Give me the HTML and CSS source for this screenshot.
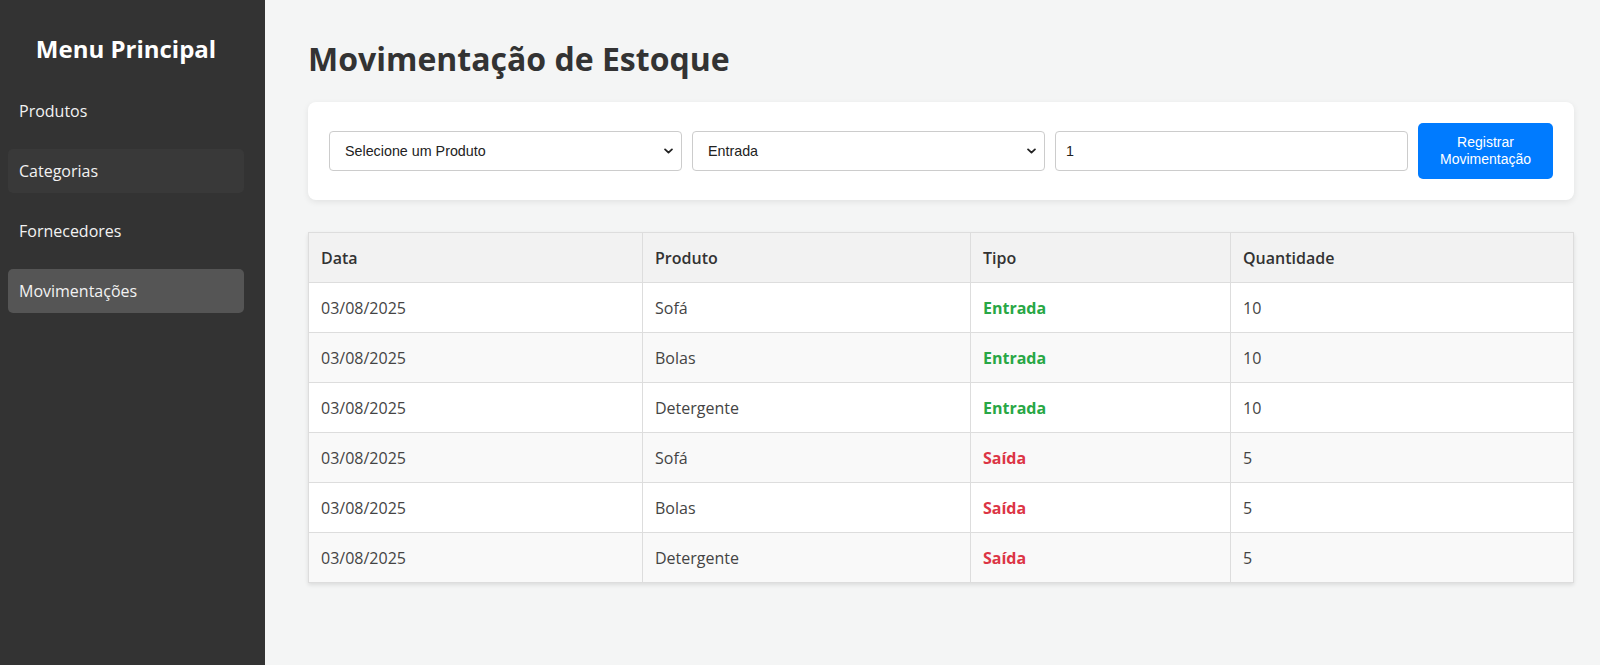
FILE: index.html
```html
<!DOCTYPE html>
<html lang="pt-BR">
<head>
<meta charset="utf-8">
<title>Movimentação de Estoque</title>
<link rel="stylesheet" href="styles.css">
</head>
<body>
<aside class="sidebar">
  <h2 class="sidebar-title">Menu Principal</h2>
  <nav class="nav">
    <a class="nav-item" href="#">Produtos</a>
    <a class="nav-item nav-item-hover" href="#">Categorias</a>
    <a class="nav-item" href="#">Fornecedores</a>
    <a class="nav-item nav-item-active" href="#">Movimentações</a>
  </nav>
</aside>
<main class="main">
  <h1 class="page-title">Movimentação de Estoque</h1>
  <form class="card form-row">
    <div class="field">
      <select class="control select">
        <option>Selecione um Produto</option>
      </select>
      <svg class="chevron" viewBox="0 0 10 6" width="9" height="6"><path d="M1.2 1.2 L5 4.8 L8.8 1.2" fill="none" stroke="#222" stroke-width="2" stroke-linecap="round" stroke-linejoin="round"/></svg>
    </div>
    <div class="field">
      <select class="control select">
        <option>Entrada</option>
        <option>Saída</option>
      </select>
      <svg class="chevron" viewBox="0 0 10 6" width="9" height="6"><path d="M1.2 1.2 L5 4.8 L8.8 1.2" fill="none" stroke="#222" stroke-width="2" stroke-linecap="round" stroke-linejoin="round"/></svg>
    </div>
    <div class="field">
      <input class="control input" type="text" value="1">
    </div>
    <button class="btn" type="button">Registrar Movimentação</button>
  </form>
  <table class="table">
    <thead>
      <tr><th class="c1">Data</th><th class="c2">Produto</th><th class="c3">Tipo</th><th>Quantidade</th></tr>
    </thead>
    <tbody>
      <tr><td>03/08/2025</td><td>Sofá</td><td class="in">Entrada</td><td>10</td></tr>
      <tr><td>03/08/2025</td><td>Bolas</td><td class="in">Entrada</td><td>10</td></tr>
      <tr><td>03/08/2025</td><td>Detergente</td><td class="in">Entrada</td><td>10</td></tr>
      <tr><td>03/08/2025</td><td>Sofá</td><td class="out">Saída</td><td>5</td></tr>
      <tr><td>03/08/2025</td><td>Bolas</td><td class="out">Saída</td><td>5</td></tr>
      <tr><td>03/08/2025</td><td>Detergente</td><td class="out">Saída</td><td>5</td></tr>
    </tbody>
  </table>
</main>
</body>
</html>
```
FILE: styles.css
```css
* { box-sizing: border-box; }
html, body { height: 100%; }
body {
  margin: 0;
  display: flex;
  font-family: "Open Sans", "Noto Sans", sans-serif;
  background: #f4f5f5;
  color: #333;
}
.sidebar {
  width: 265px;
  flex-shrink: 0;
  background: #333;
  color: #fff;
  padding: 32px 21px 0 8px;
}
.sidebar-title {
  margin: 0 0 24px;
  font-size: 24px;
  line-height: 33px;
  font-weight: 700;
  text-align: center;
}
.nav { display: flex; flex-direction: column; gap: 16px; }
.nav-item {
  display: block;
  padding: 10px 11px;
  line-height: 24px;
  font-size: 16px;
  color: #f2f2f2;
  text-decoration: none;
  border-radius: 5px;
}
.nav-item-hover { background: #393939; }
.nav-item-active { background: #555; }

.main {
  flex: 1;
  padding: 37px 26px 0 43px;
}
.page-title {
  margin: 0 0 21px;
  font-size: 32px;
  line-height: 44px;
  font-weight: 700;
  color: #333;
}
.card {
  background: #fff;
  border-radius: 8px;
  box-shadow: 0 2px 6px rgba(0,0,0,0.08);
  padding: 21px;
  margin: 0 0 32px;
}
.form-row { display: flex; align-items: center; gap: 10px; }
.field { flex: 1; position: relative; min-width: 0; }
.control {
  display: block;
  width: 100%;
  height: 40px;
  border: 1px solid #ccc;
  border-radius: 4px;
  background: #fff;
  font-family: "Liberation Sans", Arial, sans-serif;
  font-size: 14.3px;
  color: #222;
  outline: none;
}
.select {
  appearance: none;
  -webkit-appearance: none;
  padding: 0 24px 0 15px;
}
.input { padding: 0 10px; }
.chevron {
  position: absolute;
  right: 9px;
  top: 17px;
  pointer-events: none;
}
.btn {
  flex-shrink: 0;
  width: 135px;
  padding: 11px 10px;
  border: none;
  border-radius: 5px;
  background: #007bff;
  color: #fff;
  font-family: "Liberation Sans", Arial, sans-serif;
  font-size: 14px;
  line-height: 17px;
  text-align: center;
}
.table {
  width: 100%;
  border-collapse: collapse;
  background: #fff;
  box-shadow: 0 2px 4px rgba(0,0,0,0.1);
  font-size: 16px;
}
.table th, .table td {
  border: 1px solid #ddd;
  padding: 13px 12px 11px;
  line-height: 25px;
  text-align: left;
}
.table th { background: #f2f2f2; font-weight: 600; color: #333; }
.table td { color: #444; }
.table tbody tr:nth-child(even) td { background: #f9f9f9; }
.c1 { width: 334px; }
.c2 { width: 328px; }
.c3 { width: 260px; }
.table td.in { color: #28a745; font-weight: 700; }
.table td.out { color: #dc3545; font-weight: 700; }
```
